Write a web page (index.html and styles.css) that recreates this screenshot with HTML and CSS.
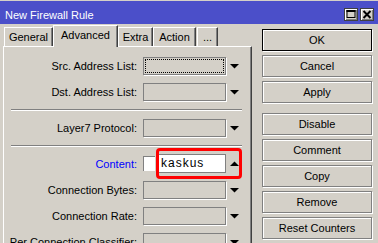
FILE: index.html
```html
<!DOCTYPE html>
<html>
<head>
<meta charset="utf-8">
<link rel="stylesheet" href="styles.css">
</head>
<body>
<div class="window">
  <div class="titlebar">
    <span class="title">New Firewall Rule</span>
    <div class="tb-btns">
      <span class="tb-btn"><svg width="12" height="11" viewBox="0 0 12 11"><rect x="2" y="1.5" width="8" height="7" fill="none" stroke="#000" stroke-width="1"/><rect x="1.5" y="1" width="9" height="2" fill="#000"/></svg></span>
      <span class="tb-btn"><svg width="12" height="11" viewBox="0 0 12 11"><path d="M2.5 2 L9.5 9 M9.5 2 L2.5 9" stroke="#000" stroke-width="2" fill="none"/></svg></span>
    </div>
  </div>
  <div class="main">
    <div class="left">
      <div class="tabs">
        <div class="tab t-general">General</div>
        <div class="tab t-adv active">Advanced</div>
        <div class="tab t-extra">Extra</div>
        <div class="tab t-action">Action</div>
        <div class="tab t-more">...</div>
      </div>
      <div class="panel">
        <div class="row">
          <div class="label">Src. Address List:</div>
          <div class="box focus"></div>
          <svg class="arrow" width="9" height="5" viewBox="0 0 9 5"><polygon points="0,0 9,0 4.5,4.5" fill="#000"/></svg>
        </div>
        <div class="row">
          <div class="label">Dst. Address List:</div>
          <div class="box"></div>
          <svg class="arrow" width="9" height="5" viewBox="0 0 9 5"><polygon points="0,0 9,0 4.5,4.5" fill="#000"/></svg>
        </div>
        <div class="sep"></div>
        <div class="row">
          <div class="label">Layer7 Protocol:</div>
          <div class="box"></div>
          <svg class="arrow" width="9" height="5" viewBox="0 0 9 5"><polygon points="0,0 9,0 4.5,4.5" fill="#000"/></svg>
        </div>
        <div class="sep sep2"></div>
        <div class="row row-content">
          <div class="label blue">Content:</div>
          <div class="check"></div>
          <div class="input">kaskus</div>
          <svg class="arrow" width="9" height="5" viewBox="0 0 9 5"><polygon points="0,5 9,5 4.5,0.5" fill="#000"/></svg>
          <div class="highlight"></div>
        </div>
        <div class="row">
          <div class="label">Connection Bytes:</div>
          <div class="box"></div>
          <svg class="arrow" width="9" height="5" viewBox="0 0 9 5"><polygon points="0,0 9,0 4.5,4.5" fill="#000"/></svg>
        </div>
        <div class="row">
          <div class="label">Connection Rate:</div>
          <div class="box"></div>
          <svg class="arrow" width="9" height="5" viewBox="0 0 9 5"><polygon points="0,0 9,0 4.5,4.5" fill="#000"/></svg>
        </div>
        <div class="row">
          <div class="label">Per Connection Classifier:</div>
          <div class="box"></div>
          <svg class="arrow" width="9" height="5" viewBox="0 0 9 5"><polygon points="0,0 9,0 4.5,4.5" fill="#000"/></svg>
        </div>
      </div>
    </div>
    <div class="buttons">
      <div class="btn default">OK</div>
      <div class="btn">Cancel</div>
      <div class="btn apply">Apply</div>
      <div class="btn">Disable</div>
      <div class="btn">Comment</div>
      <div class="btn">Copy</div>
      <div class="btn">Remove</div>
      <div class="btn">Reset Counters</div>
    </div>
  </div>
</div>
</body>
</html>
```
FILE: styles.css
```css
body {
  margin: 0;
  background: #d4d0c8;
  font-family: "Liberation Sans", Arial, sans-serif;
  font-size: 11px;
  color: #000;
}
.window {
  width: 378px;
  height: 243px;
  overflow: hidden;
  padding-top: 1px;
  box-sizing: border-box;
}
.titlebar {
  height: 23px;
  background: #4b4fc9;
  display: flex;
  justify-content: space-between;
}
.title {
  color: #fff;
  padding: 8px 0 0 5px;
  line-height: 13px;
  font-size: 11px;
}
.tb-btns {
  display: flex;
  gap: 2px;
  padding: 7px 4px 0 0;
}
.tb-btn {
  width: 14px;
  height: 13px;
  box-sizing: border-box;
  background: #d4d0c8;
  border: 1px solid #404040;
  box-shadow: inset 1px 1px #fff, inset -1px -1px #808080;
  display: flex;
  align-items: center;
  justify-content: center;
}
.main {
  display: flex;
}
.left {
  margin-left: 3px;
  width: 249px;
  flex: none;
}
.tabs {
  height: 22px;
  display: flex;
  align-items: flex-end;
  padding-left: 1px;
  position: relative;
  z-index: 1;
}
.tab {
  height: 19px;
  box-sizing: border-box;
  border-top: 1px solid #fff;
  border-left: 1px solid #fff;
  border-right: 1px solid #404040;
  box-shadow: inset -1px 0 #808080;
  text-align: center;
  line-height: 18px;
  background: #d4d0c8;
  flex: none;
}
.tab.active {
  height: 22px;
  margin-bottom: -1px;
  line-height: 18px;
}
.t-general { width: 49px; }
.t-adv { width: 65px; }
.t-extra { width: 35px; }
.t-action { width: 43px; }
.t-more { width: 21px; margin-left: 1px; }
.panel {
  height: 300px;
  box-sizing: border-box;
  border-top: 1px solid #fff;
  border-left: 1px solid #fff;
  border-right: 1px solid #404040;
  box-shadow: inset -1px 0 #808080;
  padding-top: 10px;
}
.row {
  display: flex;
  align-items: center;
  height: 18px;
  margin-bottom: 8px;
  position: relative;
}
.label {
  width: 133px;
  flex: none;
  text-align: right;
  margin-right: 6px;
  white-space: nowrap;
}
.blue { color: #0000ff; }
.box {
  width: 83px;
  height: 18px;
  box-sizing: border-box;
  border: 1px solid #808080;
  box-shadow: 1px 1px 0 #fff;
  flex: none;
}
.box.focus {
  outline: 1px dotted #000;
  outline-offset: -3px;
}
.arrow {
  margin-left: 4px;
  flex: none;
}
.sep {
  height: 0;
  width: 231px;
  border-top: 1px solid #808080;
  border-bottom: 1px solid #fff;
  margin: 0 0 8px 7px;
}
.sep2 { margin-bottom: 7px; }
.row-content { height: 19px; }
.check {
  width: 12px;
  height: 15px;
  box-sizing: border-box;
  background: #fff;
  border-top: 1px solid #808080;
  border-left: 1px solid #808080;
  flex: none;
}
.input {
  margin-left: 3px;
  width: 68px;
  height: 19px;
  box-sizing: border-box;
  background: #fff;
  border: 1px solid #808080;
  font-size: 12px;
  letter-spacing: 1px;
  line-height: 17px;
  padding-left: 2px;
  flex: none;
}
.highlight {
  position: absolute;
  left: 152px;
  top: -6px;
  width: 86px;
  height: 31px;
  box-sizing: border-box;
  border: 3px solid #ff0000;
  border-radius: 4px;
}
.buttons {
  margin-left: 10px;
  padding-top: 5px;
  display: flex;
  flex-direction: column;
}
.btn {
  width: 110px;
  height: 22px;
  box-sizing: border-box;
  border: 1px solid #808080;
  box-shadow: inset 1px 1px #fff, 1px 1px 0 #fff;
  text-align: center;
  line-height: 20px;
  margin-bottom: 4px;
}
.btn.default {
  border-color: #000;
}
.btn.apply {
  margin-bottom: 10px;
}
```
